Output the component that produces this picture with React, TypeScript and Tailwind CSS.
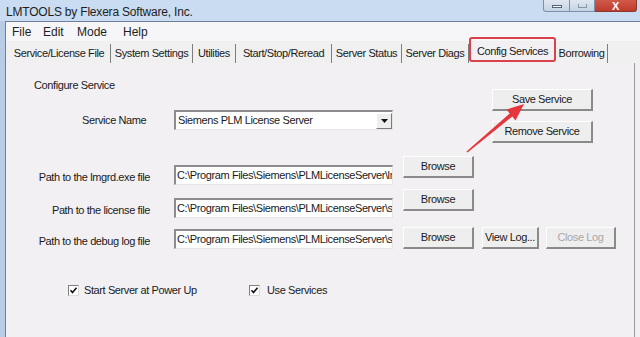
import type { ReactNode } from "react";

const tabs = [
  { label: "Service/License File", w: "w-[103px]" },
  { label: "System Settings", w: "w-[82px]" },
  { label: "Utilities", w: "w-[43px]" },
  { label: "Start/Stop/Reread", w: "w-[96px]" },
  { label: "Server Status", w: "w-[70px]" },
  { label: "Server Diags", w: "w-[67px]" },
  { label: "Config Services", w: "w-[87px]", active: true },
  { label: "Borrowing", w: "w-[52px]" },
];

function Button({
  children,
  className = "",
  disabled = false,
}: {
  children: ReactNode;
  className?: string;
  disabled?: boolean;
}) {
  return (
    <div
      className={`flex h-[22px] items-center justify-center border border-b-2 border-r-2 border-t-white border-l-white border-r-[#8a8a8a] border-b-[#8a8a8a] bg-[#efeeef] ${
        disabled ? "text-[#a8a8a8]" : "text-[#1a1a1a]"
      } ${className}`}
    >
      {children}
    </div>
  );
}

function TextBox({ value, className = "" }: { value: string; className?: string }) {
  return (
    <div
      className={`h-[20px] w-[219px] overflow-hidden border-l-2 border-t-2 border-b border-r border-l-[#8c8c8c] border-t-[#8c8c8c] border-b-[#e6e6e6] border-r-[#e6e6e6] bg-white pl-[1px] ${className}`}
    >
      <div className="w-[400px] whitespace-nowrap leading-[17px]">{value}</div>
    </div>
  );
}

function CheckBox() {
  return (
    <div className="flex h-[11px] w-[11px] items-center justify-center border border-t-[#808080] border-l-[#808080] border-b-[#dcdcdc] border-r-[#dcdcdc] bg-white">
      <svg width="9" height="9" viewBox="0 0 9 9">
        <path d="M1.5 4.2 L3.5 6.5 L7.5 1.8" fill="none" stroke="#111" strokeWidth="1.6" />
      </svg>
    </div>
  );
}

export default function App() {
  return (
    <div className="relative h-[337px] w-[640px] overflow-hidden bg-[#c3d6ee] font-['Liberation_Sans',Arial,sans-serif] text-[11px] tracking-[-0.4px] text-[#1a1a1a]">
      {/* title bar */}
      <div className="flex h-[21px] items-start bg-[#c9dcf1]">
        <span className="mt-[3px] pl-[6px] text-[12px] tracking-[-0.2px] text-[#1e1e1e]">
          LMTOOLS by Flexera Software, Inc.
        </span>
        <div className="ml-auto mr-[3px] flex">
          <div className="flex h-[12px] w-[27px] items-end justify-center rounded-bl-[3px] border border-t-0 border-[#7d8fa8] bg-gradient-to-b from-[#dfe7f1] to-[#c6d3e3] pb-[3px]">
            <div className="h-[3px] w-[10px] border border-[#55637a] bg-white" />
          </div>
          <div className="flex h-[12px] w-[25px] items-end justify-center border-b border-r border-[#7d8fa8] bg-gradient-to-b from-[#dfe7f1] to-[#c6d3e3] pb-[3px]">
            <div className="h-[4px] w-[9px] border border-t-0 border-[#8896aa]" />
          </div>
          <div className="flex h-[12px] w-[42px] items-end justify-center overflow-hidden rounded-br-[3px] border border-l-0 border-t-0 border-[#8a3a32] bg-gradient-to-b from-[#d0594a] to-[#bf3b2c] text-[11px] font-bold leading-[10px] text-white">
            <span>X</span>
          </div>
        </div>
      </div>

      <div className="flex h-[316px]">
        {/* left frame */}
        <div className="w-[5px] bg-[#b9cce5]" />
        <div className="flex flex-1 flex-col border-l border-t border-[#6f7f94] bg-[#f0f0f0]">
          {/* menu bar */}
          <div className="flex h-[19px] items-center bg-[#f6f6f8] pl-[6px] text-[12px] tracking-[0px] text-[#1e1e1e]">
            <span className="w-[31px]">File</span>
            <span className="w-[34px]">Edit</span>
            <span className="w-[46px]">Mode</span>
            <span>Help</span>
          </div>

          {/* tab strip */}
          <div className="flex h-[22px] items-end pl-[2px]">
            {tabs.map((t) => (
              <div
                key={t.label}
                className={`flex items-center justify-center whitespace-nowrap ${t.w} ${
                  t.active ? "h-[21px] bg-[#f2f0f3] pb-[2px]" : "h-[19px] border-r border-[#7d7d7d]"
                }`}
              >
                {t.label}
              </div>
            ))}
          </div>

          {/* panel */}
          <div className="mr-[5px] flex-1 border-r border-[#9c9c9c] bg-[#f2f0f3] pl-[28px]">
            <div className="flex items-start">
              <div className="w-[359px]">
                <div className="mt-[15px] leading-[14px]">Configure Service</div>
                <div className="mt-[18px] flex h-[20px] items-center">
                  <span className="w-[140px] pl-[48px]">Service Name</span>
                  <div className="flex h-[20px] w-[219px] items-center justify-between border-l-2 border-t-2 border-b border-r border-l-[#8c8c8c] border-t-[#8c8c8c] border-b-[#e6e6e6] border-r-[#e6e6e6] bg-white pl-[2px]">
                    <span className="whitespace-nowrap">Siemens PLM License Server</span>
                    <div className="flex h-[16px] w-[16px] items-center justify-center border border-t-white border-l-white border-b-[#7a7a7a] border-r-[#7a7a7a] bg-[#efeeef]">
                      <svg width="7" height="4" viewBox="0 0 7 4">
                        <path d="M0 0 H7 L3.5 4 Z" fill="#111" />
                      </svg>
                    </div>
                  </div>
                </div>
              </div>
              <div className="ml-[99px] flex flex-col">
                <Button className="mt-[26px] w-[101px]">Save Service</Button>
                <Button className="mt-[10px] w-[101px]">Remove Service</Button>
              </div>
            </div>

            <div className="mt-[13px] flex items-start">
              <span className="mt-[14px] w-[116px] text-right leading-[14px]">Path to the lmgrd.exe file</span>
              <TextBox className="ml-[24px] mt-[9px]" value={"C:\\Program Files\\Siemens\\PLMLicenseServer\\lmgrd.exe"} />
              <Button className="ml-[10px] w-[71px]">Browse</Button>
            </div>

            <div className="mt-[4px] flex items-start">
              <span className="mt-[14px] w-[116px] text-right leading-[14px]">Path to the license file</span>
              <TextBox className="ml-[24px] mt-[9px]" value={"C:\\Program Files\\Siemens\\PLMLicenseServer\\splm8.lic"} />
              <Button className="ml-[10px] w-[71px]">Browse</Button>
            </div>

            <div className="mt-[9px] flex items-start">
              <span className="mt-[7px] w-[116px] text-right leading-[14px]">Path to the debug log file</span>
              <TextBox className="ml-[24px] mt-[2px]" value={"C:\\Program Files\\Siemens\\PLMLicenseServer\\splm_ugslmd.log"} />
              <Button className="ml-[10px] w-[71px]">Browse</Button>
              <Button className="ml-[8px] w-[57px]">View Log...</Button>
              <Button disabled className="ml-[7px] w-[70px]">Close Log</Button>
            </div>

            <div className="mt-[34px] flex h-[14px] items-center pl-[34px]">
              <div className="flex w-[181px] items-center">
                <CheckBox />
                <span className="ml-[5px]">Start Server at Power Up</span>
              </div>
              <CheckBox />
              <span className="ml-[7px]">Use Services</span>
            </div>
          </div>
        </div>
      </div>

      {/* annotation: red highlight and arrow */}
      <div className="absolute left-[469px] top-[37px] h-[25px] w-[87px] rounded-[3px] border-[2.5px] border-[#d9414b]" />
      <svg className="pointer-events-none absolute left-0 top-0" width="640" height="337" viewBox="0 0 640 337">
        <polygon
          points="466.5,151.4 509.7,113.5 506.5,109.6 524,104 515.5,120.4 512.3,116.5 467.5,152.6"
          fill="#e4363c"
        />
      </svg>
    </div>
  );
}
